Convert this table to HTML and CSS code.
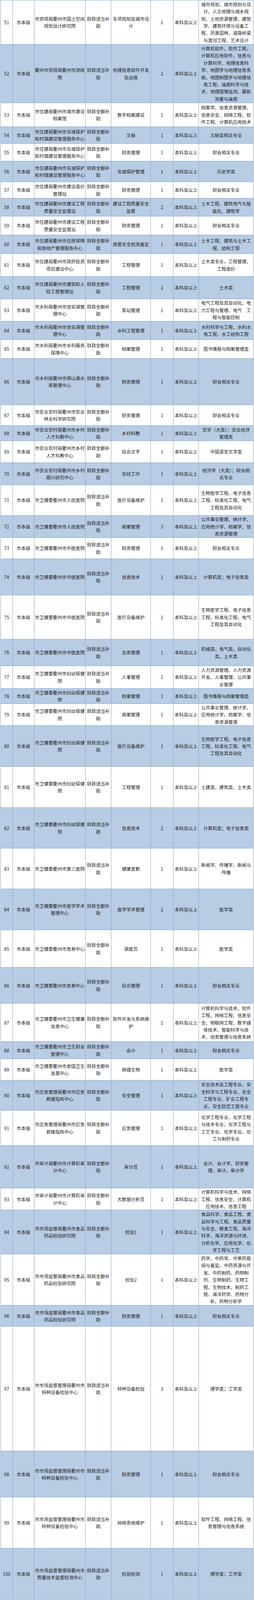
FILE: index.html
```html
<!DOCTYPE html>
<html lang="zh-CN">
<head>
<meta charset="utf-8">
<title>岗位表</title>
<link rel="stylesheet" href="styles.css">
</head>
<body>
<table class="jobs">
<colgroup>
<col class="w1"><col class="w2"><col class="w3"><col class="w4"><col class="w5"><col class="w6"><col class="w7"><col class="w8">
</colgroup>
<tbody>
<tr class="h113"><td>51</td><td>市本级</td><td>市资规局衢州市国土空间<br>规划设计研究院</td><td>财政适当补<br>助</td><td>专项规划及城市设<br>计</td><td>1</td><td>本科及以上</td><td>城市规划、城市规划与设<br>计、人文地理与城乡规<br>划、土地资源管理、建筑<br>学、建筑环境与设备工<br>程、风景园林、道路桥梁<br>与渡河工程、艺术设计</td></tr>
<tr class="h150 b"><td>52</td><td>市本级</td><td>衢州市资规局衢州市测绘<br>院</td><td>财政适当补<br>助</td><td>地理信息软件开发<br>及运维</td><td>2</td><td>本科及以上</td><td>计算机软件、软件工程，<br>计算机应用软件、信息与<br>计算科学、地理信息科<br>学、地图学与地理信息系<br>统、地图制图学与地理信<br>息工程、遥感科学与技<br>术、地理国情监测、摄影<br>测量与遥感</td></tr>
<tr class="h61"><td>53</td><td>市本级</td><td>市住建局衢州市城市建设<br>档案馆</td><td>财政全额补<br>助</td><td>数字档案建设</td><td>1</td><td>本科及以上</td><td>档案学、信息资源管理、<br>信息安全、网络工程、软<br>件工程、计算机应用技术</td></tr>
<tr class="h43 b"><td>54</td><td>市本级</td><td>市住建局衢州市名城保护<br>和村镇建设管理服务中心</td><td>财政全额补<br>助</td><td>文秘</td><td>1</td><td>本科及以上</td><td>文秘类相关专业</td></tr>
<tr class="h45"><td>55</td><td>市本级</td><td>市住建局衢州市名城保护<br>和村镇建设管理服务中心</td><td>财政全额补<br>助</td><td>财务管理</td><td>1</td><td>本科及以上</td><td>财会相关专业</td></tr>
<tr class="h53 b"><td>56</td><td>市本级</td><td>市住建局衢州市名城保护<br>和村镇建设管理服务中心</td><td>财政全额补<br>助</td><td>名城保护管理</td><td>1</td><td>本科及以上</td><td>历史学类</td></tr>
<tr class="h42"><td>57</td><td>市本级</td><td>市住建局衢州市建设造价<br>管理站</td><td>财政全额补<br>助</td><td>财务管理</td><td>1</td><td>本科及以上</td><td>财会相关专业</td></tr>
<tr class="h46 b"><td>58</td><td>市本级</td><td>市住建局衢州市建设工程<br>质量安全监督站</td><td>财政全额补<br>助</td><td>建设工程质量安全<br>监督</td><td>2</td><td>本科及以上</td><td>土木工程、建筑电气与智<br>能化、建筑学</td></tr>
<tr class="h48"><td>59</td><td>市本级</td><td>市住建局衢州市建设工程<br>质量安全监督站</td><td>财政全额补<br>助</td><td>财务管理</td><td>1</td><td>本科及以上</td><td>财会相关专业</td></tr>
<tr class="h48 b"><td>60</td><td>市本级</td><td>市住建局衢州市住房保障<br>和房地产管理服务中心</td><td>财政全额补<br>助</td><td>房屋安全检测鉴定</td><td>1</td><td>本科及以上</td><td>土木工程、建筑与土木工<br>程、结构工程</td></tr>
<tr class="h58"><td>61</td><td>市本级</td><td>市住建局衢州市政府投资<br>项目建设中心</td><td>财政全额补<br>助</td><td>工程管理</td><td>1</td><td>本科及以上</td><td>土木类专业，工程管理、<br>工程造价</td></tr>
<tr class="h58 b"><td>62</td><td>市本级</td><td>市住建局衢州市建筑和人<br>防工程管理站</td><td>财政全额补<br>助</td><td>工程管理</td><td>2</td><td>本科及以上</td><td>土木类</td></tr>
<tr class="h57"><td>63</td><td>市本级</td><td>市水利局衢州市信安湖管<br>理中心</td><td>财政全额补<br>助</td><td>泵站管理</td><td>1</td><td>本科及以上</td><td>电气工程及其自动化、电<br>力工程与管理、电气　工<br>程与智能控制</td></tr>
<tr class="h47 b"><td>64</td><td>市本级</td><td>市水利局衢州市信安湖管<br>理中心</td><td>财政全额补<br>助</td><td>水利工程管理</td><td>1</td><td>本科及以上</td><td>水利科学与工程、水利水<br>电工程、水工结构工程</td></tr>
<tr class="h48"><td>65</td><td>市本级</td><td>市水利局衢州市水利服务<br>保障中心</td><td>财政全额补<br>助</td><td>档案管理</td><td>1</td><td>本科及以上</td><td>图书情报与档案管理类</td></tr>
<tr class="h119 b"><td>66</td><td>市本级</td><td>市水利局衢州市铜山源水<br>库管理中心</td><td>财政全额补<br>助</td><td>财务管理</td><td>1</td><td>本科及以上</td><td>财会相关专业</td></tr>
<tr class="h53"><td>67</td><td>市本级</td><td>市农业农村局衢州市农业<br>林业科学研究院</td><td>财政全额补<br>助</td><td>财务管理</td><td>1</td><td>本科及以上</td><td>财会相关专业</td></tr>
<tr class="h39 b"><td>68</td><td>市本级</td><td>市农业农村局衢州市乡村<br>人才科教中心</td><td>财政全额补<br>助</td><td>乡村科教</td><td>1</td><td>本科及以上</td><td>农学（大类）；农业经济<br>管理类</td></tr>
<tr class="h56"><td>69</td><td>市本级</td><td>市农业农村局衢州市乡村<br>人才科教中心</td><td>财政全额补<br>助</td><td>综合文字</td><td>1</td><td>本科及以上</td><td>中国语言文学类</td></tr>
<tr class="h57 b"><td>70</td><td>市本级</td><td>市农业农村局衢州市乡村<br>振兴研究中心</td><td>财政全额补<br>助</td><td>农经工作</td><td>1</td><td>本科及以上</td><td>经济学（大类）；财会相<br>关专业</td></tr>
<tr class="h78"><td>71</td><td>市本级</td><td>市卫健委衢州市人民医院</td><td>财政适当补<br>助</td><td>医疗设备维护</td><td>1</td><td>本科及以上</td><td>生物医学工程、电子信息<br>工程、标准化工程、电气<br>工程及其自动化</td></tr>
<tr class="h57 b"><td>72</td><td>市本级</td><td>市卫健委衢州市人民医院</td><td>财政适当补<br>助</td><td>病案管理</td><td>3</td><td>本科及以上</td><td>公共事业管理、统计学、<br>应用统计学、档案学、信<br>息资源管理</td></tr>
<tr class="h54"><td>73</td><td>市本级</td><td>市卫健委衢州市中医医院</td><td>财政适当补<br>助</td><td>财务管理</td><td>1</td><td>本科及以上</td><td>财会相关专业</td></tr>
<tr class="h93 b"><td>74</td><td>市本级</td><td>市卫健委衢州市中医医院</td><td>财政适当补<br>助</td><td>信息技术</td><td>1</td><td>本科及以上</td><td>计算机类；电子信息类</td></tr>
<tr class="h113"><td>75</td><td>市本级</td><td>市卫健委衢州市中医医院</td><td>财政适当补<br>助</td><td>医疗设备维护</td><td>1</td><td>本科及以上</td><td>生物医学工程、电子信息<br>工程、标准化工程、电气<br>工程及其自动化</td></tr>
<tr class="h68 b"><td>76</td><td>市本级</td><td>市卫健委衢州市中医医院</td><td>财政适当补<br>助</td><td>总务管理</td><td>1</td><td>本科及以上</td><td>机械类，电气类，自动化<br>类，土木类</td></tr>
<tr class="h58"><td>77</td><td>市本级</td><td>市卫健委衢州市妇幼保健<br>院</td><td>财政适当补<br>助</td><td>人事管理</td><td>1</td><td>本科及以上</td><td>人力资源管理、人力资源<br>开发、人事管理、公共事<br>业管理</td></tr>
<tr class="h39 b"><td>78</td><td>市本级</td><td>市卫健委衢州市妇幼保健<br>院</td><td>财政适当补<br>助</td><td>档案管理</td><td>1</td><td>本科及以上</td><td>图书情报与档案管理类</td></tr>
<tr class="h56"><td>79</td><td>市本级</td><td>市卫健委衢州市妇幼保健<br>院</td><td>财政适当补<br>助</td><td>病案管理</td><td>1</td><td>本科及以上</td><td>公共事业管理、统计学、<br>应用统计学、档案学、信<br>息资源管理</td></tr>
<tr class="h105 b"><td>80</td><td>市本级</td><td>市卫健委衢州市妇幼保健<br>院</td><td>财政适当补<br>助</td><td>医疗设备维护</td><td>1</td><td>本科及以上</td><td>生物医学工程、电子信息<br>工程、标准化工程、电气<br>工程及其自动化</td></tr>
<tr class="h105"><td>81</td><td>市本级</td><td>市卫健委衢州市妇幼保健<br>院</td><td>财政适当补<br>助</td><td>工程管理</td><td>1</td><td>本科及以上</td><td>土建类、建筑类、土木类</td></tr>
<tr class="h104 b"><td>82</td><td>市本级</td><td>市卫健委衢州市妇幼保健<br>院</td><td>财政适当补<br>助</td><td>信息技术</td><td>2</td><td>本科及以上</td><td>计算机类；电子信息类</td></tr>
<tr class="h104"><td>83</td><td>市本级</td><td>市卫健委衢州市第三医院</td><td>财政适当补<br>助</td><td>健康宣教</td><td>1</td><td>本科及以上</td><td>新闻学、传播学、新闻与<br>传播</td></tr>
<tr class="h105 b"><td>84</td><td>市本级</td><td>市卫健委衢州市医学学术<br>管理中心</td><td>财政全额补<br>助</td><td>医学学术管理</td><td>2</td><td>本科及以上</td><td>医学类</td></tr>
<tr class="h96"><td>85</td><td>市本级</td><td>市卫健委衢州市急救中心</td><td>财政全额补<br>助</td><td>调度员</td><td>1</td><td>本科及以上</td><td>医学类</td></tr>
<tr class="h92 b"><td>86</td><td>市本级</td><td>市卫健委衢州市急救中心</td><td>财政全额补<br>助</td><td>综合管理</td><td>1</td><td>本科及以上</td><td>财会相关专业</td></tr>
<tr class="h98"><td>87</td><td>市本级</td><td>市卫健委衢州市卫生健康<br>信息中心</td><td>财政全额补<br>助</td><td>软件开发与系统维<br>护</td><td>2</td><td>本科及以上</td><td>计算机科学与技术、软件<br>工程、网络工程、信息安<br>全、物联网工程、数字媒<br>体技术、智能科学与技<br>术、信息管理与信息系统</td></tr>
<tr class="h44 b"><td>88</td><td>市本级</td><td>市卫健委衢州市卫生财会<br>管理中心</td><td>财政全额补<br>助</td><td>会计</td><td>1</td><td>本科及以上</td><td>财会相关专业</td></tr>
<tr class="h55"><td>89</td><td>市本级</td><td>市卫健委衢州市爱国卫生<br>发展中心</td><td>财政全额补<br>助</td><td>病媒生物</td><td>1</td><td>本科及以上</td><td>医学类</td></tr>
<tr class="h77 b"><td>90</td><td>市本级</td><td>市应急管理局衢州市应急<br>救援指挥中心</td><td>财政全额补<br>助</td><td>安全管理</td><td>1</td><td>本科及以上</td><td>安全技术及工程专业、安<br>全科学与工程专业、安全<br>工程专业、矿业工程专<br>业、安全防范工程专业</td></tr>
<tr class="h90"><td>91</td><td>市本级</td><td>市应急管理局衢州市应急<br>救援指挥中心</td><td>财政全额补<br>助</td><td>应急管理</td><td>1</td><td>本科及以上</td><td>化学工程专业、化学工程<br>与技术专业、化学工程与<br>工艺专业、化学专业、化<br>工与制药专业</td></tr>
<tr class="h109 b"><td>92</td><td>市本级</td><td>市审计局衢州市计算机审<br>计中心</td><td>财政全额补<br>助</td><td>审计员</td><td>1</td><td>本科及以上</td><td>会计、会计学、财务管<br>理、审计、审计学</td></tr>
<tr class="h56"><td>93</td><td>市本级</td><td>市审计局衢州市计算机审<br>计中心</td><td>财政全额补<br>助</td><td>大数据分析员</td><td>1</td><td>本科及以上</td><td>计算机科学与技术、网络<br>工程、信息安全、计算机<br>应用技术、信息工程</td></tr>
<tr class="h113 b"><td>94</td><td>市本级</td><td>市市场监管局衢州市食品<br>药品检验研究院</td><td>财政全额补<br>助</td><td>检验1</td><td>1</td><td>本科及以上</td><td>食品科学、食品工程、食<br>品科学与工程、食品质量<br>与安全、粮食工程、海洋<br>科学、海洋资源与环境、<br>分析化学、应用化学、化<br>学工程与工艺</td></tr>
<tr class="h131"><td>95</td><td>市本级</td><td>市市场监管局衢州市食品<br>药品检验研究院</td><td>财政全额补<br>助</td><td>检验2</td><td>1</td><td>本科及以上</td><td>药学、中药学、中草药栽<br>培与鉴定、中药资源与开<br>发、中药制药、药物制<br>剂、生物制药、生物工<br>程、生物技术、制药工<br>程、海洋药学、药物分<br>析、药物分析学</td></tr>
<tr class="h54 b"><td>96</td><td>市本级</td><td>市市场监管局衢州市食品<br>药品检验研究院</td><td>财政全额补<br>助</td><td>财务管理</td><td>1</td><td>本科及以上</td><td>财会相关专业</td></tr>
<tr class="h319"><td>97</td><td>市本级</td><td>市市场监督管理局衢州市<br>特种设备检验中心</td><td>财政适当补<br>助</td><td>特种设备检验</td><td>3</td><td>本科及以上</td><td>理学类；工学类</td></tr>
<tr class="h118 b"><td>98</td><td>市本级</td><td>市市场监督管理局衢州市<br>特种设备检验中心</td><td>财政适当补<br>助</td><td>财务管理</td><td>1</td><td>本科及以上</td><td>财会相关专业</td></tr>
<tr class="h131"><td>99</td><td>市本级</td><td>市市场监督管理局衢州市<br>特种设备检验中心</td><td>财政适当补<br>助</td><td>网络系统维护</td><td>1</td><td>本科及以上</td><td>软件工程、网络工程、信<br>息管理与信息系统</td></tr>
<tr class="h131 b"><td>100</td><td>市本级</td><td>市市场监督管理局衢州市<br>质量技术监督检测中心</td><td>财政适当补<br>助</td><td>检验检测</td><td>1</td><td>本科及以上</td><td>理学类；工学类</td></tr>
</tbody>
</table>
</body>
</html>
```

FILE: styles.css
```css
html, body {
  margin: 0;
  padding: 0;
  background: #ffffff;
}

body {
  font-family: "Noto Sans CJK SC", "Noto Sans", sans-serif;
  color: #1c1c1c;
}

.jobs {
  border-collapse: collapse;
  table-layout: fixed;
  width: 647px;
  margin-left: 1px;
  font-size: 11.6px;
  line-height: 18.4px;
}

.w1 { width: 31px; }
.w2 { width: 55px; }
.w3 { width: 131px; }
.w4 { width: 66px; }
.w5 { width: 101px; }
.w6 { width: 58px; }
.w7 { width: 65px; }
.w8 { width: 140px; }

.jobs td {
  border: 1px solid #8aa5cd;
  padding: 0;
  text-align: center;
  vertical-align: middle;
  white-space: nowrap;
}

.jobs tr.b td {
  background: #b8cce4;
}

.h39 { height: 39px; }
.h42 { height: 42px; }
.h43 { height: 43px; }
.h44 { height: 44px; }
.h45 { height: 45px; }
.h46 { height: 46px; }
.h47 { height: 47px; }
.h48 { height: 48px; }
.h53 { height: 53px; }
.h54 { height: 54px; }
.h55 { height: 55px; }
.h56 { height: 56px; }
.h57 { height: 57px; }
.h58 { height: 58px; }
.h61 { height: 61px; }
.h68 { height: 68px; }
.h77 { height: 77px; }
.h78 { height: 78px; }
.h90 { height: 90px; }
.h92 { height: 92px; }
.h93 { height: 93px; }
.h96 { height: 96px; }
.h98 { height: 98px; }
.h104 { height: 104px; }
.h105 { height: 105px; }
.h109 { height: 109px; }
.h113 { height: 113px; }
.h118 { height: 118px; }
.h119 { height: 119px; }
.h131 { height: 131px; }
.h150 { height: 150px; }
.h319 { height: 319px; }
```
